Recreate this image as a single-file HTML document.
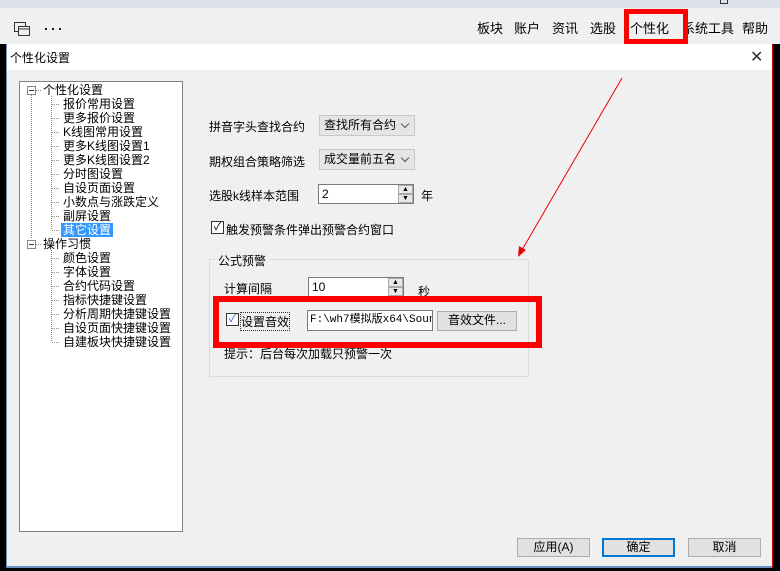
<!DOCTYPE html>
<html><head><meta charset="utf-8"><style>
*{margin:0;padding:0;box-sizing:border-box}
body{width:780px;height:571px;overflow:hidden;background:#000;font-family:"Liberation Sans","Noto Sans CJK SC",sans-serif;font-size:12px;color:#000;position:relative}
.a{position:absolute;white-space:nowrap}
.tree div{height:14px;line-height:14px;position:relative}
.combo{position:absolute;height:21px;background:#e5e5e5;border:1px solid #c8c8c8;padding-left:4px;line-height:19px}
.combo:after{content:"";position:absolute;right:6px;top:5px;width:5px;height:5px;border-right:1px solid #555;border-bottom:1px solid #555;transform:rotate(45deg)}
.btn{position:absolute;height:19px;background:#e1e1e1;border:1px solid #adadad;text-align:center;line-height:17px}
.spin{position:absolute;background:#fff;border:1px solid #7a7a7a;height:20px;line-height:18px;padding-left:3px}
.sp{position:absolute;right:0;width:15px;height:9px;background:#e8e8e8;border:1px solid #aaa;font-size:7px;line-height:7px;text-align:center}
</style></head><body>
<div class="a" style="left:0;top:0;width:780px;height:8px;background:#dfe2ea"></div>
<div class="a" style="left:0;top:8px;width:780px;height:36px;background:#f0f0f0"></div>
<svg class="a" style="left:14px;top:22px" width="18" height="14"><rect x="0.5" y="0.5" width="11" height="9" fill="none" stroke="#333"/><rect x="4.5" y="4.5" width="11" height="9" fill="#f0f0f0" stroke="#333"/><line x1="4" y1="7" x2="16" y2="7" stroke="#333"/></svg>
<svg class="a" style="left:44px;top:27px" width="18" height="4"><rect x="1" y="1" width="2" height="2" fill="#222"/><rect x="8" y="1" width="2" height="2" fill="#222"/><rect x="15" y="1" width="2" height="2" fill="#222"/></svg>
<div class="a" style="left:477px;top:18px;font-size:13px">板块</div>
<div class="a" style="left:514px;top:18px;font-size:13px">账户</div>
<div class="a" style="left:552px;top:18px;font-size:13px">资讯</div>
<div class="a" style="left:590px;top:18px;font-size:13px">选股</div>
<div class="a" style="left:630px;top:18px;font-size:13px">个性化</div>
<div class="a" style="left:682px;top:18px;font-size:13px">系统工具</div>
<div class="a" style="left:742px;top:18px;font-size:13px">帮助</div>
<div class="a" style="left:624px;top:9px;width:64px;height:35px;border:5px solid #f00"></div>
<div class="a" style="left:720px;top:0;width:8px;height:4px;border:1px solid #333;border-top:none"></div>

<div class="a" style="left:6px;top:44px;width:766px;height:524px;background:#f0f0f0;border-left:1px solid #6a8fc0;border-bottom:2px solid #6a8fc0"></div>
<div class="a" style="left:7px;top:44px;width:765px;height:26px;background:#fff"></div>
<div class="a" style="left:10px;top:49px;font-size:12px">个性化设置</div>
<div class="a" style="left:750px;top:47px;font-size:16px;color:#333">✕</div>
<div class="a" style="left:772px;top:44px;width:8px;height:524px;background:#000;border-left:1px solid #c00"></div>

<div class="a" style="left:19px;top:81px;width:164px;height:451px;background:#fff;border:1px solid #828282"></div>
<div class="a tree" style="left:43px;top:83px">
<div>个性化设置</div>
<div style="left:20px">报价常用设置</div><div style="left:20px">更多报价设置</div><div style="left:20px">K线图常用设置</div><div style="left:20px">更多K线图设置1</div><div style="left:20px">更多K线图设置2</div><div style="left:20px">分时图设置</div><div style="left:20px">自设页面设置</div><div style="left:20px">小数点与涨跌定义</div><div style="left:20px">副屏设置</div><div style="left:18px;width:52px;background:#3399ff;color:#fff;padding-left:2px">其它设置</div>
<div>操作习惯</div>
<div style="left:20px">颜色设置</div><div style="left:20px">字体设置</div><div style="left:20px">合约代码设置</div><div style="left:20px">指标快捷键设置</div><div style="left:20px">分析周期快捷键设置</div><div style="left:20px">自设页面快捷键设置</div><div style="left:20px">自建板块快捷键设置</div>
</div>
<svg class="a" style="left:26px;top:84px" width="40" height="262"><g stroke="#888" stroke-dasharray="1 1" fill="none"><line x1="5.5" y1="11" x2="5.5" y2="154"/><line x1="25.5" y1="12" x2="25.5" y2="146"/><line x1="25.5" y1="166" x2="25.5" y2="258"/><line x1="10" y1="6.5" x2="16" y2="6.5"/><line x1="10" y1="160.5" x2="16" y2="160.5"/>
<path d="M26 20.5h8M26 34.5h8M26 48.5h8M26 62.5h8M26 76.5h8M26 90.5h8M26 104.5h8M26 118.5h8M26 132.5h8M26 146.5h8M26 174.5h8M26 188.5h8M26 202.5h8M26 216.5h8M26 230.5h8M26 244.5h8M26 258.5h8"/></g>
<rect x="1.5" y="2.5" width="8" height="8" fill="#fff" stroke="#888"/><line x1="3" y1="6.5" x2="8" y2="6.5" stroke="#333"/>
<rect x="1.5" y="156.5" width="8" height="8" fill="#fff" stroke="#888"/><line x1="3" y1="160.5" x2="8" y2="160.5" stroke="#333"/></svg>

<div class="a" style="left:209px;top:118px;font-size:12px">拼音字头查找合约</div>
<div class="combo" style="left:319px;top:115px;width:96px">查找所有合约</div>
<div class="a" style="left:209px;top:153px">期权组合策略筛选</div>
<div class="combo" style="left:319px;top:149px;width:96px">成交量前五名</div>
<div class="a" style="left:209px;top:187px">选股k线样本范围</div>
<div class="spin" style="left:318px;top:184px;width:96px">2<div class="sp" style="top:0">▲</div><div class="sp" style="top:9px">▼</div></div>
<div class="a" style="left:421px;top:187px">年</div>
<div class="a" style="left:211px;top:221px;width:13px;height:13px;border:1px solid #333;background:#fff;font-size:11px;line-height:11px;text-align:center">✓</div>
<div class="a" style="left:226px;top:221px">触发预警条件弹出预警合约窗口</div>

<div class="a" style="left:209px;top:259px;width:320px;height:118px;border:1px solid #dcdcdc"></div>
<div class="a" style="left:215px;top:252px;background:#f0f0f0;padding:0 3px">公式预警</div>
<div class="a" style="left:224px;top:280px">计算间隔</div>
<div class="spin" style="left:308px;top:277px;width:96px">10<div class="sp" style="top:0">▲</div><div class="sp" style="top:9px">▼</div></div>
<div class="a" style="left:418px;top:283px">秒</div>
<div class="a" style="left:226px;top:313px;width:13px;height:13px;border:1px solid #333;background:#fff;font-size:11px;line-height:11px;text-align:center;color:#2a6fc9">✓</div>
<div class="a" style="left:241px;top:313px;outline:1px dotted #333">设置音效</div>
<div class="a" style="left:307px;top:310px;width:126px;height:21px;background:#fff;border:1px solid #7a7a7a;font-family:'Liberation Mono','Noto Sans CJK SC',monospace;font-size:11px;line-height:19px;padding-left:2px;overflow:hidden">F:\wh7模拟版x64\Soun</div>
<div class="btn" style="left:437px;top:311px;width:80px;height:20px">音效文件...</div>
<div class="a" style="left:224px;top:345px">提示：后台每次加载只预警一次</div>
<div class="a" style="left:213px;top:296px;width:329px;height:52px;border:6px solid #f00"></div>

<svg class="a" style="left:0;top:0" width="780" height="571"><line x1="622" y1="78" x2="522" y2="250" stroke="#e00" stroke-width="1"/><polygon points="518,257 519,246 526,250" fill="#e00"/></svg>

<div class="btn" style="left:517px;top:538px;width:73px">应用(A)</div>
<div class="btn" style="left:602px;top:538px;width:73px;border:2px solid #0078d7;line-height:15px">确定</div>
<div class="btn" style="left:688px;top:538px;width:73px">取消</div>
</body></html>
